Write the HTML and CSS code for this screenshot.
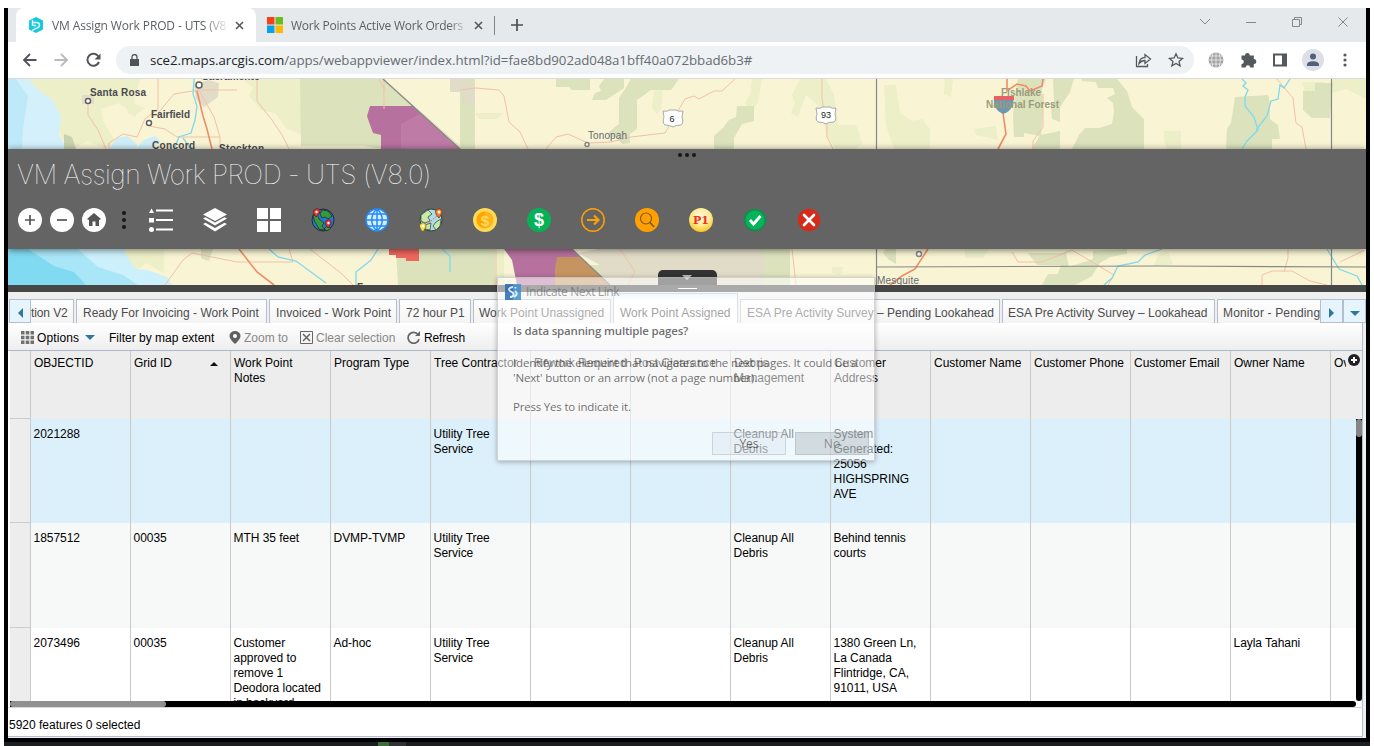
FILE: index.html
```html
<!DOCTYPE html>
<html lang="en">
<head>
<meta charset="utf-8">
<title>VM Assign Work PROD - UTS (V8.0)</title>
<link rel="stylesheet" href="styles.css">
</head>
<body>
<div class="window">
  <div class="tabstrip">
    <div class="btab active">
      <svg class="fav" width="16" height="16" viewBox="0 0 16 16"><path d="M8 0l7 3.500v9L8 16l-7-3.500v-9z" fill="#18c8dc"/><path d="M4.500 3v5.500M4.500 5.500h4q3 0 3 2.500t-3 3.200L4 13.500M4.500 8.500h3.500" fill="none" stroke="#e4fbff" stroke-width="1.400"/></svg>
      <span class="bt fade1">VM Assign Work PROD - UTS (V8</span>
      <svg width="9" height="9" viewBox="0 0 9 9"><path d="M1 1l7 7M8 1L1 8" stroke="#55595d" stroke-width="1.600"/></svg>
    </div>
    <div class="btab second">
      <svg class="fav" width="16" height="16" viewBox="0 0 16 16"><path d="M0 0h7.500v7.500H0z" fill="#f8401a"/><path d="M8.500 0H16v7.500H8.500z" fill="#6abd1e"/><path d="M0 8.500h7.500V16H0z" fill="#03a3f2"/><path d="M8.500 8.500H16V16H8.500z" fill="#ffb800"/></svg>
      <span class="bt fade2">Work Points Active Work Orders -</span>
      <svg width="9" height="9" viewBox="0 0 9 9"><path d="M1 1l7 7M8 1L1 8" stroke="#55595d" stroke-width="1.600"/></svg>
    </div>
    <svg class="newtab" width="12" height="12" viewBox="0 0 12 12"><path d="M6 0v12M0 6h12" stroke="#4b4e51" stroke-width="1.700"/></svg>
    <svg class="winctl" width="150" height="12" viewBox="0 0 150 12" fill="none" stroke="#85888b"><path d="M1 3l5 5 5-5M47 6.500h10M93.500 3.500h7v7h-7zM95.500 3V1.500h7v7H101M139.500 1.500l9 9M148.500 1.500l-9 9"/></svg>
  </div>
  <div class="addr">
    <svg class="nav" width="84" height="18" viewBox="0 0 84 18" fill="none" stroke-width="1.800"><path d="M14.500 9H2M8 3L2 9l6 6" stroke="#505458"/><path d="M32.500 9H45M39 3l6 6-6 6" stroke="#b8bbbd"/><path d="M76.500 5.500A6 6 0 1 0 77 11" stroke="#505458" stroke-width="2"/><path d="M78.500 2.500v6h-6z" fill="#505458"/></svg>
    <div class="omni">
      <svg width="9" height="12" viewBox="0 0 9 12"><path d="M0 5h9v7H0z" fill="#505458"/><path d="M2 5V3a2.500 2.500 0 0 1 5 0v2" fill="none" stroke="#505458" stroke-width="1.300"/></svg>
      <span class="url"><b>sce2.maps.arcgis.com</b>/apps/webappviewer/index.html?id=fae8bd902ad048a1bff40a072bbad6b3#</span>
      <svg class="omni-r" width="50" height="16" viewBox="0 0 50 16" fill="none" stroke="#55595d" stroke-width="1.300"><path d="M1.500 4v10.500h11V12M4 11.500c.500-4 3-6 6-6v-3L15.500 7 10 11.500V8.500c-3 0-4.500 1-6 3z"/><path d="M41 1.800l1.900 4.200 4.600.4-3.500 3 1.100 4.500L41 11.500l-4.100 2.400L38 9.400l-3.500-3 4.600-.4z"/></svg>
    </div>
    <svg class="ext" width="144" height="24" viewBox="0 0 144 24"><g fill="none"><circle cx="13" cy="12" r="7.500" fill="#a2a2a2"/><path d="M5 12h16M6 8h14M6 16h14M13 4v16M10 4.500q-3 7.500 0 15M16 4.500q3 7.500 0 15" stroke="#e8e8e8" stroke-width=".9"/></g><path d="M38.500 7.500H42a2.400 2.400 0 0 1 4.800 0h4V11a2.500 2.500 0 0 1 0 5v3.500h-3.600a2.300 2.300 0 0 0-4.600 0h-4.100V16a2.300 2.300 0 0 0 0-4.600z" fill="#55595d"/><path d="M71 6.500h12v11H71z" fill="none" stroke="#55595d" stroke-width="2"/><path d="M79 6h5v12h-5z" fill="#55595d"/><circle cx="110" cy="12" r="11" fill="#dcdfe6"/><circle cx="110" cy="8.500" r="3" fill="#50607a"/><path d="M104 18v-1.500c0-4.500 12-4.500 12 0V18z" fill="#50607a"/><g fill="#55595d"><circle cx="142" cy="7" r="1.600"/><circle cx="142" cy="12" r="1.600"/><circle cx="142" cy="17" r="1.600"/></g></svg>
  </div>
  <div class="mapview">
    <svg class="map" width="1358" height="206" viewBox="8 79 1358 206">
      <path d="M8 79h1358v206H8z" fill="#f8f4d4"/>
      <g fill="#ecefc8">
        <path d="M25 79h84l22 10-4 12 18 7-10 7-16-12-18 6 2 12 12 20-10 8-18-8-14 8-12-12-6-26-20-15z"/><path d="M100 79h40l-6 20 2 18-8-4-4-14-12-4z"/>
        <path d="M243 79h60v56l-16-6-12-16-14-3-12-14 4-8z"/>
        <path d="M655 87h8l-2 22-4 5-5-6zM752 79h10l-4 24-8 8-5-8 5-8zM800 79h26l8 16 4 30 18 0 6 18-6 6h-20l-10-14-4-26-16-14-8 22-7-4 4-10-3-8zM884 85h12l4 28 12 8 10-2 8 10v20h-36l-8-24zM1164 131h17v18h-14l-3-8zM1302 82h22l2 28-10 6-10-22zM1333 79h33v20l-20-10-14 4zM475 113h28l-6 6h-18zM945 79h8l-2 18-7-3zM974 129l22-3 2 14-22-5z"/>
        <path d="M120 249h44v24l-18-10-10 8-14-10zM488 249h16v36h-12l-4-18zM832 267h12l-4 8-8-2zM965 249h24l-6 9h-18zM1168 252l5 12-20 3 6-13z"/>
      </g>
      <g fill="#dce2bc">
        <path d="M300 79h84l76 67v3h-76l-20-3H301zM460 79h15v46h-15zM460 124h15v25h-15zM556 79h34v11h-18l-3-3h-13zM604 79h20v9l-18 12h-14l3-7 6-2-2-5zM631 79h48l-8 11h-20l-14 10v29l-7 5v9l-8 1-6-7h-7v-5l10-8V98l6-9zM737 106h17v15l-12 3-8 14v11h-20v-13l9-8 6-8 7-3z"/>
        <path d="M1018 79h28l-4 10 1 23-2 24-17-3v4l-10 0-1-22 2-20zM1053 79h21l-4 13-10 15v15l-8-3-1-14 3-2zM1081 79h36l10 12 5 16 12 12 0 30h-72l7-14 6-7h14l13-4 2-12-1-9-6-5 8-4-2-6h-15l-2-6-14-1zM1235 97l33-2 2 8v16l8 6 2 14h-8v10h-46l1-20 4-6zM1303 91h12v-8h18l-3 35-18 0-9-8zM1040 135l20-4v18h-28z"/>
        <path d="M396 249h90l5 36h-93zM460 249h35v36h-35zM590 265h30v20h-38zM763 249h27v36h-27zM885 249h11v15l-8-5-5-6zM1028 253h38l3 14 24-8v-8l34-2v5l-17 3-10 6-8 13-13 7-7 4h-31l7-13h10l3-9h-24zM201 249h12l-4 12-8-3z"/>
      </g>
      <path d="M8 79h20l11 12 14 9 8 17-2 18 9 14H8z" fill="#d4f1fb"/><path d="M8 79h8l12 17-3 20-2 14-1 19H8z" fill="#bee9f8"/>
      <path d="M109 149l8-11 10-2 10 8v5zM136 149l8-9 11-4 5 5-8 8z" fill="#ceeff9"/>
      <path d="M8 249h115l12 20 12 1 20 7 5 8H8z" fill="#ccf0fc"/><path d="M8 249h70l20 18 25 8 15 10H8z" fill="#a9e7f8"/><path d="M8 249h20l26 17 20 6 12 13H8z" fill="#80dbf2"/>
      <path d="M64 134l8 3 4 12H64z" fill="#cbd2b0"/>
      <path d="M450 79h14l11 6v19h-13v-12h-12zM598 249h165v36H600v-20l-22-12zM194 85l14-5 11 3-1 14-14 10-8-8zM82 95h12v9h-12z" fill="#e1dcc7"/>
      <path d="M370 106h43l47 43h-79v-14l-8-2-4-11-2-6z" fill="#b6719e"/><path d="M401 124l20-11 39 36h-59z" fill="#bd7ba5"/>
      <path d="M504 249h68l38 36h-93l-5-25z" fill="#b6719e"/><path d="M557 257h23l30 28h-55v-16z" fill="#c59460"/>
      <path d="M389 249h30v12h-13v-3h-10v-3h-7z" fill="#ef665e"/>
      <g fill="none" stroke="#f3c1a9" stroke-width="1">
        <path d="M88 104v11l10 15 8 19M158 79v30l-13 10-8 18-14-3-14 9v6M158 113l16-19 25-4h38M149 126l16 3 12 8h43v12M200 92l14 25 6 20M257 79v22l15 19 10 15 7 14M384 79v30M379 79l6 12M460 90l16-2 23 2 5 6 5 26 11 10 8 17M546 149l10-12 12-3 20 9 23-1 20-5 34-4 20-34 9-3 5 3 15-8h8l15-14M822 79v20l5 26v12l6 12M1043 94v33l-10 14v8M1277 79l16 19 3 25 6 4 4 22"/>
        <path d="M165 285l18-25 9-7 45 9h56l-4-13M310 249l32 25 11 11M496 249v36M620 249l10 15 5 8-7 13M792 249l4 36M1012 252l6 10h24l30-12 42 25-6 10M1262 285v-10l10-4h20l18 10 17 4M1288 249v9l-4 14M1340 262l25-12"/>
      </g>
      <path d="M197 91l6 25 4 13 5 20M239 249l18 23 17 13M1007 79v12l10-7 9 2 4 5 12-5 1-7M1003 113l3 21-8 15M928 249l-13 20-13 7-12 9" fill="none" stroke="#f28b66" stroke-width="1.600"/>
      <g fill="none" stroke="#7fd9ee" stroke-width="1.300"><path d="M194 79l-1 15 4 12-2 14-4 13-12 4-5 12M183 138l8 11M269 249l9 8 18 4 30 22M378 249l-7 11-15 12v13M1242 79l4 4-3 3 5 4-3 7v9l9 11 4 13-11 11-5 8M1290 79l-6 9-4-3-2 14-7 2-4 15-11 14"/><path d="M1162 249l-17 6-7 7-20 4-6 12-8 7M1327 249l12 20 18 7 5 9M442 249l8 7v16"/></g>
      <g fill="none" stroke="#888" stroke-width="1.200"><path d="M383 79l77 70 112 100 38 36M876.500 79v206M1331.500 79v206M876 267l282-1 208 1"/></g>
      <g fill="#fff" stroke="#606060" stroke-width="1.500"><circle cx="88" cy="101" r="2.500"/><circle cx="149" cy="123" r="2.500"/><circle cx="199" cy="85" r="3"/><circle cx="587" cy="144.500" r="2" stroke="#888"/><circle cx="919" cy="254" r="2.500" stroke="#888"/></g>
      <path d="M663 111q5 1 6-1h7q2 2 7 1l-1 6q2 6-1 8-6 0-8 2-3-2-8-2-3-2-1-8zM816 108q5 1 6-1h8q2 2 6 1l-1 6q2 6-1 8-6 0-8 2-3-2-8-2-3-2-1-8z" fill="#fff" stroke="#aaa"/>
      <path d="M994 97h20l-1 8q-3 7-10 9-7-3-9-10z" fill="#6f97ae"/><path d="M994 96h20v4h-20z" fill="#e95f66"/>
      <g class="maplbl"><text x="90" y="96" textLength="56">Santa Rosa</text><text x="151" y="118" textLength="39">Fairfield</text><text x="152" y="149" textLength="43">Concord</text><text x="219" y="152" textLength="45">Stockton</text><text x="202" y="80" textLength="58">Sacramento</text><text x="357" y="291">Fresno</text></g>
      <g class="mapsub"><text x="588" y="139" textLength="39">Tonopah</text><text x="877" y="284" textLength="42">Mesquite</text><text x="669.500" y="122" class="shield">6</text><text x="821" y="118" class="shield">93</text></g>
      <g class="forest"><text x="1001" y="96" textLength="40">Fishlake</text><text x="986" y="108" textLength="73">National Forest</text></g>
    </svg>
    <div class="apphead">
      <div class="grip"><i></i><i></i><i></i></div>
      <div class="title">VM Assign Work PROD - UTS (V8.0)</div>
      <div class="tools">
        <svg width="24" height="24" viewBox="0 0 24 24"><circle cx="12" cy="12" r="12" fill="#fff"/><path d="M12 7v10M7 12h10" stroke="#555" stroke-width="1.700"/></svg>
        <svg width="24" height="24" viewBox="0 0 24 24"><circle cx="12" cy="12" r="12" fill="#fff"/><path d="M7 12h10" stroke="#555" stroke-width="1.700"/></svg>
        <svg width="24" height="24" viewBox="0 0 24 24"><circle cx="12" cy="12" r="12" fill="#fff"/><path d="M12 5l7 6-1.500 1L17 11.500V18h-3.500v-4.500h-3V18H7v-6.500l-.5.500L5 11z" fill="#555"/></svg>
        <div class="vdots"><i></i><i></i><i></i></div>
        <div class="widgets">
          <svg width="24" height="24" viewBox="0 0 24 24" fill="#fff"><path d="M2.500 .5L5 5H0zM0 10h5v4.500H0zM7 1.500h17v2H7zM7 11h17v2H7zM7 20.500h17v2H7z"/><circle cx="2.500" cy="21.500" r="2.500"/></svg>
          <svg width="24" height="24" viewBox="0 0 24 24" fill="#fff"><path d="M12 0l12 6.500L12 13 0 6.500zM0 10.500l2.500-1.300L12 14.500l9.500-5.300 2.500 1.300L12 17.500zM0 16l2.500-1.300L12 20l9.500-5.300L24 16l-12 7.500z"/></svg>
          <svg width="24" height="24" viewBox="0 0 24 24" fill="#fff"><path d="M0 0h11v11H0zM13 0h11v11H13zM0 13h11v11H0zM13 13h11v11H13z"/></svg>
          <svg width="24" height="24" viewBox="0 0 24 24"><circle cx="12" cy="12" r="11" fill="#2478cf" stroke="#282828"/><path d="M2 8l4-2 2 5 5 4-2 3 3 4-6-1-4-7zM11 2l6 1 4 5-4 3-3-2-3 1-2-4zM16 18l4 2-4 3-3-2z" fill="#359b39" stroke="#222" stroke-width=".7"/><path d="M5 9Q1 4 3 2q3-3 6 0 1 3-4 7zM17 20q-4-5-2-7 3-3 5 0 1 3-3 7z" fill="#ef3338" stroke="#422" stroke-width=".7"/><circle cx="5.500" cy="4" r="1.200" fill="#fff"/><circle cx="17.500" cy="15" r="1.200" fill="#fff"/></svg>
          <svg width="24" height="24" viewBox="0 0 24 24"><circle cx="12" cy="12" r="11" fill="#d8edff"/><path d="M1 12h22M3 6h18M3 18h18M12 1v22M12 1C5 7 5 17 12 23M12 1c7 6 7 16 0 22" stroke="#218bf7" stroke-width="1.500" fill="none"/><circle cx="12" cy="12" r="11" fill="none" stroke="#218bf7" stroke-width="1.500"/></svg>
          <svg width="24" height="24" viewBox="0 0 24 24"><circle cx="12" cy="12" r="11" fill="#aadfea" stroke="#303c38"/><path d="M2 7l7-5 4 4-4 3 2 4-5 2-4-2zM17 14l5-3-1 7-4 4-3-4zM6 17l6-2-1 7-5-1z" fill="#c9e9a6" stroke="#3b5047" stroke-width=".8"/><path d="M7 17L18 8" stroke="#e66" stroke-dasharray="2 1"/><path d="M20 10q-5-5-3-8 3-3 6 0 1 3-3 8z" fill="#ff7a1c" stroke="#5a351a" stroke-width=".7"/><path d="M4 24q-5-5-3-8 3-3 6 0 1 3-3 8z" fill="#f6dc42" stroke="#5c5126" stroke-width=".7"/><circle cx="20" cy="4" r="1.500" fill="#fff"/><circle cx="4" cy="18" r="1.500" fill="#fff"/></svg>
          <svg width="24" height="24" viewBox="0 0 24 24"><circle cx="12" cy="12" r="12" fill="#ffda54"/><circle cx="12" cy="12" r="8.500" fill="#ffb322"/><path d="M12 3.500a8.500 8.500 0 0 0 0 17z" fill="#ffa400"/><text x="12" y="17.500" class="dol" fill="#ffdc57">$</text></svg>
          <svg width="24" height="24" viewBox="0 0 24 24"><circle cx="12" cy="12" r="12" fill="#07b157"/><text x="12" y="18" class="dol big" fill="#fff">$</text></svg>
          <svg width="24" height="24" viewBox="0 0 24 24" fill="none" stroke="#ffa000"><circle cx="12" cy="12" r="11.200" stroke-width="1.500"/><path d="M6 12h11M13 7.500l4.500 4.500-4.500 4.500" stroke-width="2.200"/></svg>
          <svg width="24" height="24" viewBox="0 0 24 24"><circle cx="12" cy="12" r="12" fill="#ffa000"/><circle cx="11" cy="10.500" r="5.500" fill="none" stroke="#7d5b2a" stroke-width="1.200"/><path d="M15 14.500l4 4.500" stroke="#7d5b2a" stroke-width="1.800"/></svg>
          <svg width="24" height="24" viewBox="0 0 24 24"><defs><radialGradient id="gold" cx=".5" cy=".35" r=".65"><stop offset="0" stop-color="#fffbe0"/><stop offset=".6" stop-color="#ffe98f"/><stop offset="1" stop-color="#f9c21d"/></radialGradient></defs><circle cx="12" cy="12" r="12" fill="url(#gold)"/><text x="12" y="16" class="p1">P1</text></svg>
          <svg width="24" height="24" viewBox="0 0 24 24"><circle cx="12" cy="12" r="10.300" fill="#07b35a" stroke="#07944a" stroke-width="1.500"/><path d="M7 12l3.500 4L17.500 8" fill="none" stroke="#fff" stroke-width="2.800"/></svg>
          <svg width="24" height="24" viewBox="0 0 24 24"><circle cx="12" cy="12" r="11.200" fill="#d52b1b"/><path d="M7 7l10 10M17 7L7 17" stroke="#fff" stroke-width="2.600" stroke-linecap="round"/></svg>
        </div>
      </div>
    </div>
    <div class="handle"></div>
  </div>
  <div class="divider"></div>
  <div class="panel">
    <div class="ptabs">
      <div class="arrow left"></div>
      <div class="list">
        <div class="pt w0">tion V2</div><div class="pt w1">Ready For Invoicing - Work Point</div><div class="pt w2">Invoiced - Work Point</div><div class="pt w3">72 hour P1</div><div class="pt w4">Work Point Unassigned</div><div class="pt w5 sel">Work Point Assigned</div><div class="pt w6">ESA Pre Activity Survey – Pending Lookahead</div><div class="pt w7">ESA Pre Activity Survey – Lookahead</div><div class="pt w8">Monitor - Pending</div>
      </div>
      <div class="arrow right"></div><div class="arrow down"></div>
    </div>
    <div class="pbar">
      <svg width="13" height="13" viewBox="0 0 13 13" fill="#707070"><path d="M0 0h3.500v3.500H0zM4.700 0h3.600v3.500H4.700zM9.500 0H13v3.500H9.500zM0 4.700h3.500v3.600H0zM4.700 4.700h3.600v3.600H4.700zM9.500 4.700H13v3.600H9.500zM0 9.500h3.500V13H0zM4.700 9.500h3.600V13H4.700zM9.500 9.500H13V13H9.500z"/></svg>
      <span class="o1">Options</span><i class="caret"></i><span class="o2">Filter by map extent</span>
      <svg width="12" height="13" viewBox="0 0 12 13"><path d="M6 13Q.5 8 .5 5a5.500 5 0 0 1 11 0Q11.500 8 6 13z" fill="#606060"/><circle cx="6" cy="5" r="2" fill="#fff"/></svg>
      <span class="o3 dim">Zoom to</span>
      <svg width="13" height="13" viewBox="0 0 13 13" fill="none" stroke="#666"><path d="M.5.500h12v12H.5z"/><path d="M3 3l7 7M10 3l-7 7" stroke-width="1.500"/></svg>
      <span class="o4 dim">Clear selection</span>
      <svg width="13" height="13" viewBox="0 0 13 13"><path d="M11 3.500A5.500 5.500 0 1 0 12 8" fill="none" stroke="#666" stroke-width="1.700"/><path d="M13 0v5H8z" fill="#666"/></svg>
      <span class="o5">Refresh</span>
    </div>
    <div class="gridwrap">
      <div class="grid">
        <div class="row head"><div class="c0"></div><div>OBJECTID</div><div>Grid ID<i class="sort"></i></div><div>Work Point<br>Notes</div><div>Program Type</div><div>Tree Contractor</div><div>Rework Required</div><div>Post Clearance</div><div>Debris Management</div><div>Customer Address</div><div>Customer Name</div><div>Customer Phone</div><div>Customer Email</div><div>Owner Name</div><div class="last">Ov</div></div>
        <div class="row r1"><div class="c0"></div><div>2021288</div><div></div><div></div><div></div><div>Utility Tree Service</div><div></div><div></div><div>Cleanup All Debris</div><div>System Generated: 25056 HIGHSPRING AVE</div><div></div><div></div><div></div><div></div><div class="last"></div></div>
        <div class="row r2"><div class="c0"></div><div>1857512</div><div>00035</div><div>MTH 35 feet</div><div>DVMP-TVMP</div><div>Utility Tree Service</div><div></div><div></div><div>Cleanup All Debris</div><div>Behind tennis courts</div><div></div><div></div><div></div><div></div><div class="last"></div></div>
        <div class="row r3"><div class="c0"></div><div>2073496</div><div>00035</div><div>Customer approved to remove 1 Deodora located in backyard</div><div>Ad-hoc</div><div>Utility Tree Service</div><div></div><div></div><div>Cleanup All Debris</div><div>1380 Green Ln, La Canada Flintridge, CA, 91011, USA</div><div></div><div></div><div></div><div>Layla Tahani</div><div class="last"></div></div>
        <div class="hscroll"><i></i></div>
      </div>
      <div class="side"><div class="vscroll"><i></i></div></div>
      <svg class="plus" width="12" height="12" viewBox="0 0 12 12"><circle cx="6" cy="6" r="6" fill="#222"/><path d="M6 3v6M3 6h6" stroke="#fff" stroke-width="2"/></svg>
    </div>
    <div class="status">5920 features 0 selected</div>
  </div>
  <div class="dialog">
    <div class="dh"><svg width="16" height="16" viewBox="0 0 16 16"><path d="M0 0h16v16H0z" fill="#418fd0"/><path d="M0 0h8v16H0z" fill="#286bb0"/><path d="M8 3q-6 1-3 4 5 2 3 5-1 1-3 1M10.500 3v1.500M10 7q4 3-1 6" fill="none" stroke="#e6f4ff" stroke-width="1.800"/></svg><span>Indicate Next Link</span></div>
    <div class="db"><b>Is data spanning multiple pages?</b><p><span class="l1">Identify the element that navigates to the next pages. It could be a</span><br><span class="l2">'Next' button or an arrow (not a page number).</span></p><p class="l3">Press Yes to indicate it.</p></div>
    <div class="btns"><span>Yes</span><span class="no">No</span></div>
  </div>
</div>
<div class="taskbar"><i></i><i></i></div>
</body>
</html>
```
FILE: styles.css
```css
* { box-sizing: border-box; }
body { margin: 0; padding: 8px 4px 0; background: #fff; width: 1374px; height: 746px; overflow: hidden; font-family: "Liberation Sans", sans-serif; }
svg { display: block; flex: none; }
.window { position: relative; width: 1366px; height: 734px; border: solid #000; border-width: 0 4px 4px; background: #fff; overflow: hidden; }
.taskbar { height: 4px; width: 1366px; background: #1c1f21; display: flex; padding-left: 374px; }
.taskbar i { width: 11px; background: #3c6d3b; }
.taskbar i + i { width: 17px; background: #303436; }

.tabstrip { height: 34px; background: #e6e9ec; display: flex; align-items: center; padding-left: 8px; font: 12px "Open Sans", sans-serif; color: #5b5f63; }
.btab { display: flex; align-items: center; height: 34px; white-space: nowrap; }
.btab.active { width: 240px; background: #fff; border-radius: 8px 8px 0 0; padding-left: 12px; }
.btab.second { width: 239px; padding-left: 11px; border-right: 1px solid #85888b; height: 19px; }
.fav { margin-right: 8px; }
.bt { width: 176px; margin-right: 7px; overflow: hidden; }
.fade1 { letter-spacing: -.13px; mask-image: linear-gradient(90deg, #000 86%, transparent 101%); }
.fade2 { letter-spacing: -.22px; mask-image: linear-gradient(90deg, #000 90%, transparent 101%); }
.newtab { margin-left: 16px; }
.winctl { margin: -6px 17px 0 auto; }
.addr { height: 37px; border-bottom: 1px solid #d8dadd; display: flex; align-items: center; padding-left: 14px; }
.omni { width: 1078px; height: 28px; margin-left: 10px; border-radius: 14px; background: #eef2f4; display: flex; align-items: center; padding-left: 14px; }
.url { margin-left: 11px; font: 13.3px "Open Sans", sans-serif; color: #686c70; letter-spacing: -.05px; white-space: nowrap; }
.url b { font-weight: 400; color: #202428; }
.omni-r { margin: 0 9px 0 auto; }
.ext { margin-left: 9px; }

.mapview { position: relative; height: 206px; overflow: hidden; }
.maplbl { font: bold 10px "Liberation Sans", sans-serif; fill: #4a4a50; }
.mapsub { font: 10px "Liberation Sans", sans-serif; fill: #666b73; }
.shield { font-size: 9px; fill: #222; }
.forest { font: bold 10px "Liberation Sans", sans-serif; fill: #9a9c7c; }
.apphead { position: absolute; left: 0; right: 0; top: 70px; height: 100px; background: #646464; box-shadow: 0 1px 7px rgba(0,0,0,.55); }
.grip { display: flex; justify-content: center; gap: 3px; height: 11px; padding: 4px 0 3px; }
.grip i, .vdots i { width: 4px; height: 4px; border-radius: 50%; background: #171717; }
.title { font: 100 26.5px/28px Inter, sans-serif; color: #fff; padding-left: 9px; height: 48px; letter-spacing: -.52px; white-space: nowrap; }
.tools { display: flex; gap: 8px; padding-left: 10px; }
.vdots { width: 24px; display: flex; flex-direction: column; justify-content: space-between; align-items: center; padding: 3px 0; margin-left: -2px; }
.widgets { display: flex; gap: 30px; margin-left: 5px; }
.dol { font: bold 15px "Liberation Sans", sans-serif; text-anchor: middle; }
.big { font-size: 18px; }
.p1 { font: bold 11px "DejaVu Serif", serif; fill: #f12c20; text-anchor: middle; }
.handle { position: absolute; left: 650px; bottom: 0; width: 59px; height: 15px; border-radius: 5px 5px 0 0; background: #333; }
.handle::after { content: ""; position: absolute; left: 24px; top: 5px; border: 5px solid transparent; border-top-color: #bbb; border-bottom: 0; }
.divider { height: 7px; background: #474747; display: flex; justify-content: center; }
.divider::after { content: ""; width: 19px; height: 1px; margin-top: 3px; background: #fff; }

.panel { height: 446px; background: #efefef; font-size: 12px; color: #000; }
.ptabs { height: 31px; display: flex; align-items: flex-end; padding-left: 1px; }
.arrow { width: 23px; height: 24px; border: 1px solid #b4bed0; background: #e6f4fe; flex: none; display: flex; align-items: center; justify-content: center; padding-top: 4px; }
.arrow::after { content: ""; border: 5px solid transparent; }
.left { width: 22px; }
.left::after { border-right-color: #2f789c; border-left: 0; }
.right::after { border-left-color: #2f789c; border-right: 0; }
.down::after { border-top-color: #2f789c; border-bottom: 0; }
.list { width: 1290px; display: flex; gap: 2px; align-items: flex-end; overflow: hidden; height: 31px; }
.pt { flex: none; height: 24px; border: solid #b4bed0; border-width: 1px 1px 0; background: linear-gradient(#fff, #f3f3f3); line-height: 27px; padding-left: 6px; white-space: nowrap; color: #4c4c4c; overflow: hidden; }
.w0 { width: 43px; padding: 0; border-left: 0; letter-spacing: -.1px; }
.w1 { width: 191px; } .w2 { width: 128px; letter-spacing: .06px; } .w3 { width: 72px; } .w4 { width: 138px; padding-left: 5px; } .w5 { width: 125px; } .w6 { width: 260px; } .w7 { width: 213px; padding-left: 5px; } .w8 { width: 120px; padding-left: 5px; letter-spacing: .15px; }
.pt.sel { height: 30px; line-height: 38px; background: linear-gradient(#e1f2fd, #fff 8px); color: #333; }
.pbar { height: 28px; border-bottom: 1px solid #adb8cc; background: linear-gradient(#fff, #eee); display: flex; align-items: center; padding: 2px 0 0 13px; margin-right: 3px; border-right: 1px solid #b4bed0; white-space: nowrap; }
.pbar span { margin-left: 3px; line-height: 24px; flex: none; }
.o1 { width: 42px; letter-spacing: .12px; } .pbar .o2 { width: 120px; margin-left: 14px; } .o3 { width: 56px; } .pbar .o4 { width: 91px; margin-left: 3px; } .pbar .o5 { margin-left: 4px; letter-spacing: -.15px; }
.dim { color: #888; }
.caret { margin-left: 6px; border: 5px solid transparent; border-top-color: #2f789c; border-bottom: 0; }
.gridwrap { position: relative; display: flex; height: 357px; margin-right: 3px; padding-left: 2px; border-right: 1px solid #b4bed0; border-bottom: 1px solid #d8d8d8; background: #fff; }
.grid { width: 1346px; overflow: hidden; }
.row { display: grid; grid-template-columns: 20px repeat(13, 100px) 1fr; line-height: 15px; height: 105px; overflow: hidden; }
.row > div { border-left: 1px solid #c9c9c9; padding: 8px 4px 0 2.5px; min-width: 0; letter-spacing: -.04px; }
.row > .c0 { background: #ededed; border-left: 0; border-bottom: 1px solid #ccc; }
.row.head { height: 68px; background: #ededed; position: relative; }
.row.head > div { padding: 5px 0 0 3px; letter-spacing: 0; }
.row .last { overflow: hidden; }
.row.head > .last { margin-right: 10px; white-space: nowrap; }
.r1 { background: #dcf0fb; height: 104px; }
.r2 { background: #f7f9f8; height: 105px; }
.r3 { background: #fff; height: 73px; }
.sort { float: right; margin: 6px 12px 0 0; border: 4px solid transparent; border-bottom-color: #111; border-top: 0; }
.hscroll { height: 6px; background: #000; border-radius: 0 3px 3px 0; }
.hscroll i { display: block; width: 156px; height: 6px; border-radius: 3px; background: #909090; }
.side { width: 6px; padding-top: 68px; background: #ededed; height: 350px; }
.vscroll { height: 282px; background: #000; border-radius: 0 0 3px 3px; }
.vscroll i { display: block; height: 18px; border-radius: 3px; background: #858585; }
.plus { position: absolute; left: 1340px; top: 3px; }
.status { height: 29px; margin-right: 3px; background: #fff; border-right: 1px solid #b4bed0; border-bottom: 1px solid #b4bed0; line-height: 34px; padding-left: 1px; }

.dialog { position: absolute; left: 489px; top: 269px; width: 378px; height: 184px; background: rgba(255,255,255,.54); border: 1px solid rgba(180,180,180,.55); box-shadow: 0 1px 5px rgba(0,0,0,.3); font: 12px "Open Sans", sans-serif; color: rgba(40,40,40,.68); }
.dh { display: flex; align-items: center; gap: 5px; padding: 5px 7px; color: rgba(80,80,80,.55); letter-spacing: -.38px; }
.dh svg { opacity: .85; }
.db { padding: 12px 0 0 15px; white-space: nowrap; line-height: 15px; font-size: 11.5px; height: 127px; letter-spacing: -.14px; }
.db b { display: block; font-weight: 600; line-height: 28px; letter-spacing: -.18px; }
.db p { margin: 10px 0 0; }
.db .l3 { margin-top: 14px; letter-spacing: -.2px; }
.btns { display: flex; gap: 9px; justify-content: flex-end; padding-right: 5px; }
.btns span { width: 74px; height: 23px; border: 1px solid rgba(160,170,180,.4); background: rgba(200,210,220,.2); text-align: center; line-height: 22px; }
.btns .no { background: rgba(120,130,140,.25); color: rgba(60,60,60,.5); }
```
